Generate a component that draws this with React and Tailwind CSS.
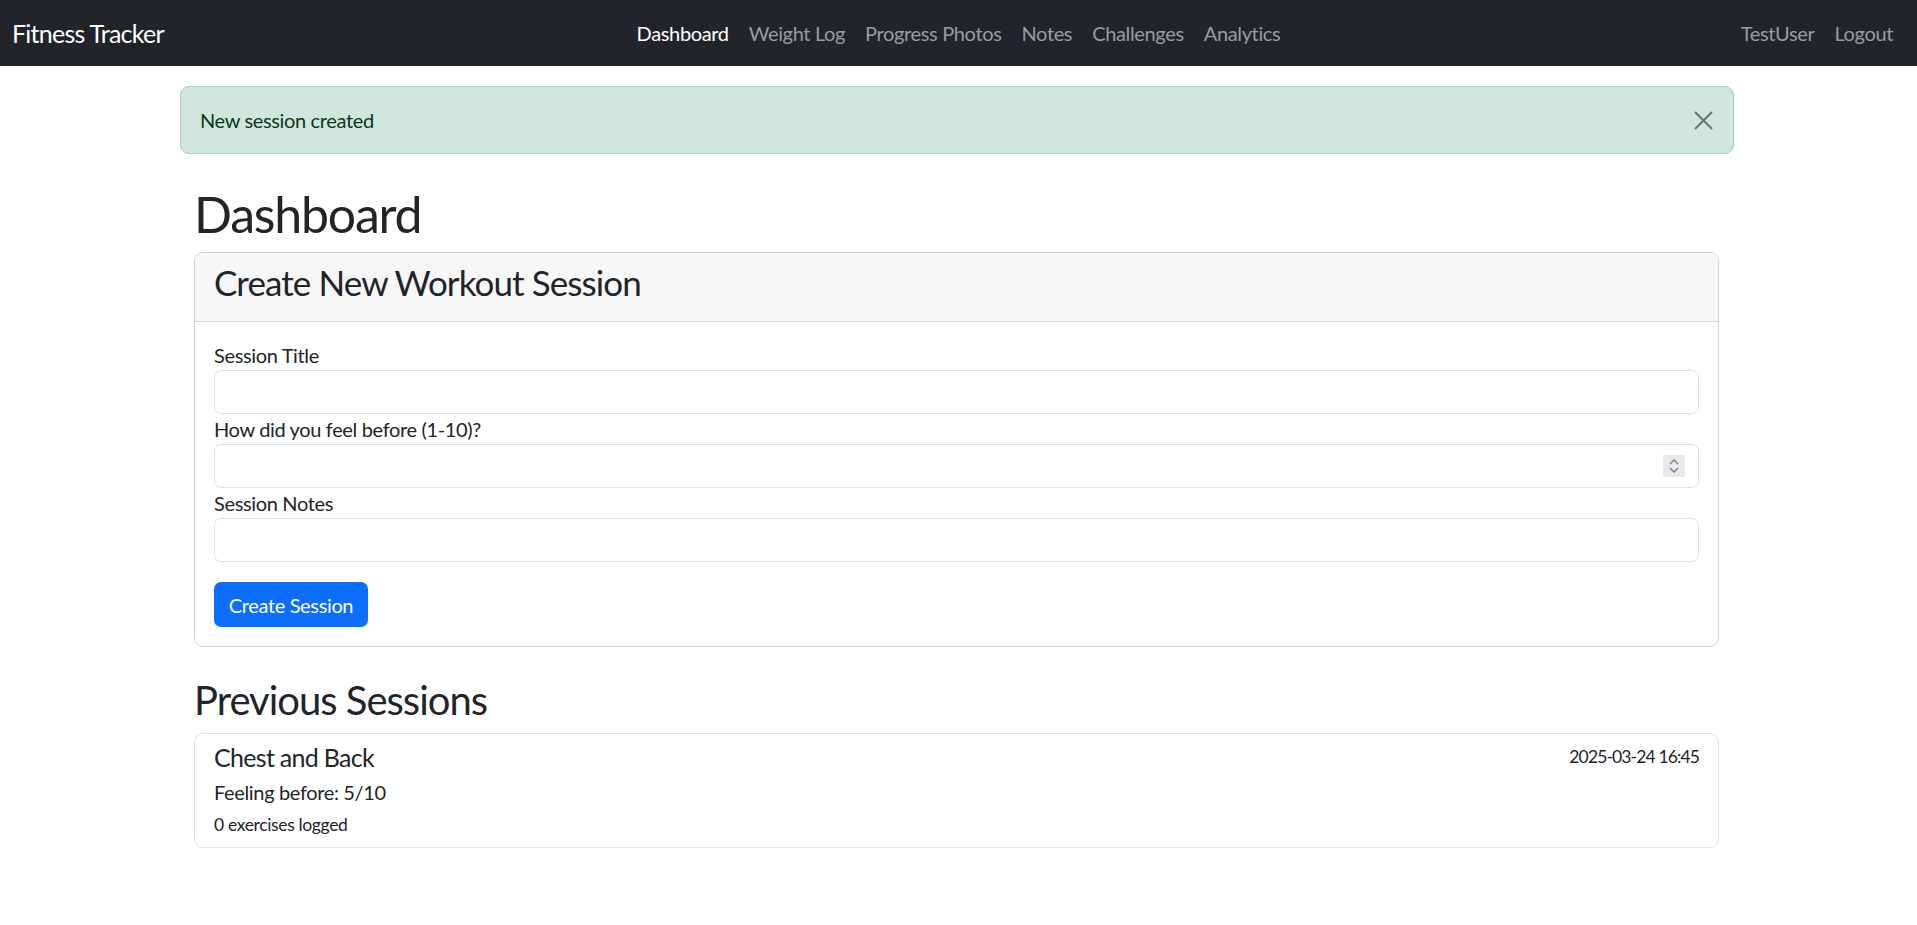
import { useState } from "react";

const links = ["Dashboard", "Weight Log", "Progress Photos", "Notes", "Challenges", "Analytics"];

const Navbar = () => {
  return (
    <nav className="w-full h-[66px] px-3 flex items-center bg-[#212529]">
      <a className="text-[25px] leading-[30px] text-white w-[330px] tracking-[-0.03em]">Fitness Tracker</a>
      <div className="flex-1 flex justify-center">
        <div className="flex">
          {links.map((l, i) => (
            <a
              key={l}
              className={`px-[10px] text-[20px] leading-[30px] ${i === 0 ? "text-white" : "text-[#9a9c9e]"}`}
            >
              {l}
            </a>
          ))}
        </div>
      </div>
      <div className="w-[330px] flex justify-end">
        <a className="px-[10px] text-[20px] leading-[30px] text-[#9a9c9e]">TestUser</a>
        <a className="pl-[10px] pr-[12px] text-[20px] leading-[30px] text-[#9a9c9e]">Logout</a>
      </div>
    </nav>
  );
};

const Field = ({ label, spinner }) => (
  <div>
    <label className="block text-[20px] leading-[30px]">{label}</label>
    <div className="relative">
      <input
        type="text"
        className="w-full h-[44px] border border-[#dee2e6] rounded-[7px] px-4 text-[20px] outline-none bg-white"
      />
      {spinner && (
        <div className="absolute right-[14px] top-[11px] w-[22px] h-[22px] bg-[#e9e9ed] flex flex-col items-center justify-center gap-[2px]">
          <svg width="10" height="6" viewBox="0 0 10 6">
            <path d="M1 5 L5 1 L9 5" fill="none" stroke="#7b7b80" strokeWidth="1.3" />
          </svg>
          <svg width="10" height="6" viewBox="0 0 10 6">
            <path d="M1 1 L5 5 L9 1" fill="none" stroke="#7b7b80" strokeWidth="1.3" />
          </svg>
        </div>
      )}
    </div>
  </div>
);

const App = () => {
  const [alert, setAlert] = useState(true);
  return (
    <div className="min-h-screen bg-white text-[#212529] tracking-[-0.022em] font-['Segoe_UI','Lato','Noto_Sans',sans-serif]">
      <Navbar />
      <div className="w-[1554px] ml-[180px] pt-5">
        {alert && (
          <div className="h-[68px] flex items-center justify-between pl-[19px] pr-5 border border-[#a3cfbb] bg-[#d1e7dd] rounded-[9px] text-[#0a3622] text-[20px] leading-[30px]">
            <span>New session created</span>
            <button onClick={() => setAlert(false)} className="w-[19px] h-[19px]">
              <svg width="19" height="19" viewBox="0 0 19 19">
                <path d="M1 1 L18 18 M18 1 L1 18" stroke="#687670" strokeWidth="2" />
              </svg>
            </button>
          </div>
        )}
        <div className="pl-[14px] pr-[15px]">
          <h1 className="text-[50px] leading-[60px] mt-[30px] mb-2 tracking-[-0.024em]">Dashboard</h1>
          <div className="border border-[#d3d4d5] rounded-[9px] overflow-hidden">
            <div className="h-[69px] bg-[#f7f7f7] border-b border-[#d3d4d5] px-[19px] pt-[8px]">
              <h3 className="text-[35px] leading-[42px] tracking-[-0.026em]">Create New Workout Session</h3>
            </div>
            <div className="px-[19px] pt-[18px] pb-[19px]">
              <Field label="Session Title" />
              <Field label="How did you feel before (1-10)?" spinner />
              <Field label="Session Notes" />
              <button className="mt-5 w-[154px] h-[45px] bg-[#0d6efd] text-white text-[20px] rounded-[7px]">
                Create Session
              </button>
            </div>
          </div>
          <h2 className="text-[40px] leading-[48px] mt-[29px] mb-[9px] tracking-[-0.025em]">Previous Sessions</h2>
          <div className="h-[115px] border border-[#dee2e6] rounded-[9px] px-[19px] pt-[8px]">
            <div className="flex justify-between items-start">
              <h5 className="text-[25px] leading-[30px] tracking-[-0.028em]">Chest and Back</h5>
              <small className="text-[17.5px] leading-[26px] mt-[2px] tracking-[-0.05em]">2025-03-24 16:45</small>
            </div>
            <p className="text-[20px] leading-[30px] mt-[5px]">Feeling before: 5/10</p>
            <p className="text-[17.5px] leading-[26px] mt-[5px]">0 exercises logged</p>
          </div>
        </div>
      </div>
    </div>
  );
};

export default App;
